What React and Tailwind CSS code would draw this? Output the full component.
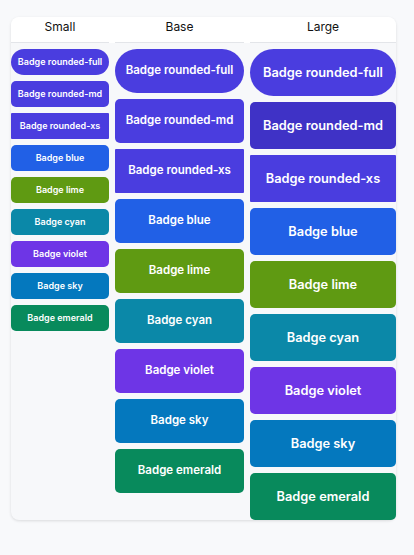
import React from "react";

const badges = [
  { label: "Badge rounded-full", color: "bg-[#4a3ddf]", shape: "rounded-full" },
  { label: "Badge rounded-md", color: "bg-[#4a3ddf]", shape: "rounded-[5px]" },
  { label: "Badge rounded-xs", color: "bg-[#4a3ddf]", shape: "rounded-[1px]" },
  { label: "Badge blue", color: "bg-[#2160e6]", shape: "rounded-[5px]" },
  { label: "Badge lime", color: "bg-[#5f9a12]", shape: "rounded-[5px]" },
  { label: "Badge cyan", color: "bg-[#0b88a8]", shape: "rounded-[5px]" },
  { label: "Badge violet", color: "bg-[#6e35e6]", shape: "rounded-[5px]" },
  { label: "Badge sky", color: "bg-[#0478be]", shape: "rounded-[5px]" },
  { label: "Badge emerald", color: "bg-[#088a5c]", shape: "rounded-[5px]" },
];

const sizes = {
  small: "h-[26px] text-[9px]",
  base: "h-[44px] text-[11.5px]",
  large: "h-[47px] text-[12.8px]",
};

const Badge = ({ badge, size }) => {
  // large rounded-md is the darker one in the design
  const color =
    size === "large" && badge.label === "Badge rounded-md"
      ? "bg-[#3f32c6]"
      : badge.color;
  return (
    <div
      className={`flex items-center justify-center w-full font-semibold text-white whitespace-nowrap ${sizes[size]} ${color} ${badge.shape}`}
    >
      {badge.label}
    </div>
  );
};

const Column = ({ size }) => (
  <div className="flex flex-col gap-[6px]">
    {badges.map((b) => (
      <Badge key={b.label} badge={b} size={size} />
    ))}
  </div>
);

const App = () => {
  return (
    <div
      className="min-h-[555px] w-full bg-[#f8f9fb] pt-[17px] pl-[11px]"
      style={{ fontFamily: "Inter, 'Noto Sans', sans-serif" }}
    >
      <div className="w-[385px] rounded-lg bg-[#f7f8fa] shadow-[0_1px_3px_rgba(0,0,0,0.12)]">
        <div className="grid grid-cols-[98px_129px_146px] gap-x-[6px] rounded-t-lg bg-white">
          {["Small", "Base", "Large"].map((h) => (
            <div
              key={h}
              className="h-[26px] pb-[5px] flex items-center justify-center border-b border-[#e3e5e9] text-[12px] text-[#111]"
            >
              {h}
            </div>
          ))}
        </div>
        <div className="grid grid-cols-[98px_129px_146px] gap-x-[6px] items-start pt-[6px]">
          <Column size="small" />
          <Column size="base" />
          <Column size="large" />
        </div>
      </div>
    </div>
  );
};

export default App;
